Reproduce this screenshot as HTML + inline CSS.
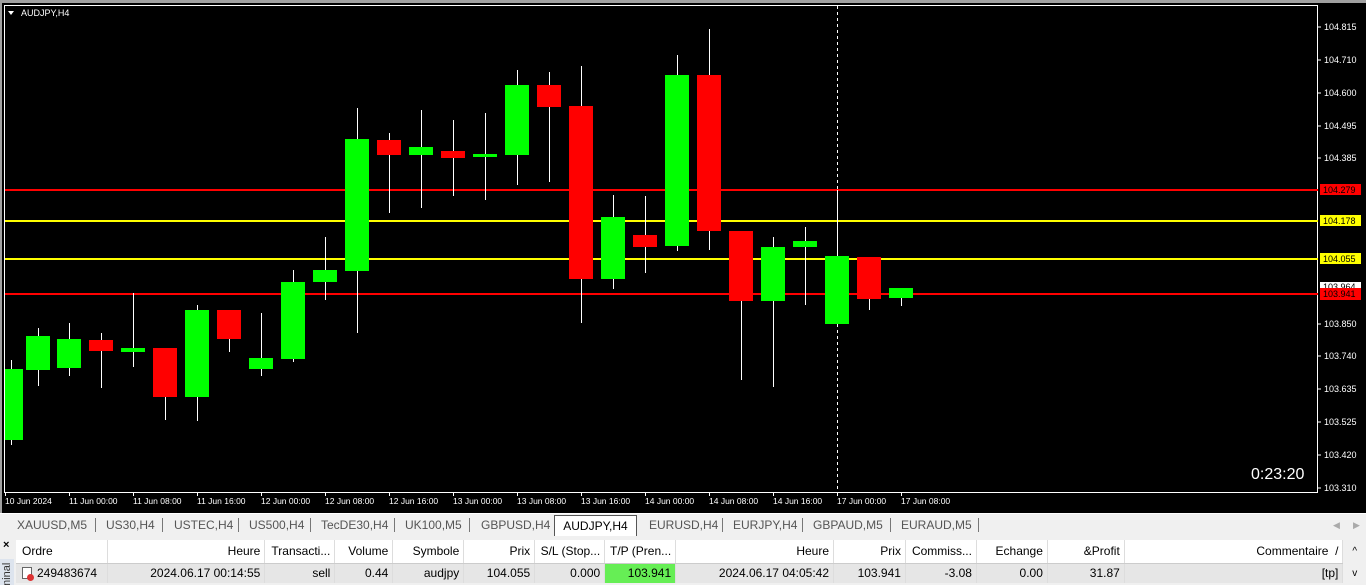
<!DOCTYPE html>
<html><head><meta charset="utf-8"><style>
*{margin:0;padding:0;box-sizing:border-box}
body{width:1366px;height:585px;overflow:hidden;background:#f0f0f0;font-family:"Liberation Sans",sans-serif;position:relative}
#chart{position:absolute;left:0;top:0}
.tabs{position:absolute;top:513px;left:0;width:1366px;height:22px;background:#f0f0f0;border-top:1px solid #fff;font-size:12px;color:#555}
.tab{position:absolute;top:4px}
.sep{position:absolute;top:4px;width:1px;height:14px;background:#777}
.act{position:absolute;left:554px;top:1px;width:83px;height:21px;background:#fff;border:1px solid #555;border-bottom:none;color:#000;text-align:center;padding-top:3px}
.term{position:absolute;top:537px;left:0;width:1366px;height:48px;background:#f0f0f0}
table{position:absolute;left:16px;top:540px;border-collapse:collapse;font-size:12px;color:#000}
td{height:23px;border-right:1px solid #ddd;padding:0 4px;white-space:nowrap;overflow:hidden}
tr.h td{background:#fff;border-bottom:1px solid #ccc}
tr.r td{background:#e6e6e6;height:20px}
.R{text-align:right}
</style></head><body>
<svg id="chart" width="1366" height="513" xmlns="http://www.w3.org/2000/svg" font-family="Liberation Sans, sans-serif">
<rect x="0" y="0" width="1366" height="513" fill="#000"/>
<rect x="0" y="0" width="1366" height="3" fill="#a0a0a0"/>
<rect x="0" y="0" width="2" height="513" fill="#a0a0a0"/>
<rect x="4.5" y="5.5" width="1313" height="487" fill="none" stroke="#fff" stroke-width="1"/>
<polygon points="8,11 14,11 11,15" fill="#fff"/>
<text x="21" y="16" font-size="9" fill="#fff">AUDJPY,H4</text>
<line x1="837.5" y1="6" x2="837.5" y2="492" stroke="#fff" stroke-dasharray="3,3"/>
<g stroke-width="1">
<line x1="5" y1="190" x2="1318" y2="190" stroke="#f00" stroke-width="2"/>
<line x1="5" y1="221" x2="1318" y2="221" stroke="#ff0" stroke-width="2"/>
<line x1="5" y1="259" x2="1318" y2="259" stroke="#ff0" stroke-width="2"/>
<line x1="5" y1="294" x2="1318" y2="294" stroke="#f00" stroke-width="2"/>
</g>
<g id="c"></g>
<g font-size="9" fill="#fff">
<text x="1324" y="30">104.815</text><text x="1324" y="63">104.710</text><text x="1324" y="96">104.600</text><text x="1324" y="129">104.495</text><text x="1324" y="161">104.385</text><text x="1324" y="327">103.850</text><text x="1324" y="359">103.740</text><text x="1324" y="392">103.635</text><text x="1324" y="425">103.525</text><text x="1324" y="458">103.420</text><text x="1324" y="491">103.310</text>
</g>
<g stroke="#fff"><line x1="1318" y1="27" x2="1321" y2="27"/><line x1="1318" y1="60" x2="1321" y2="60"/><line x1="1318" y1="93" x2="1321" y2="93"/><line x1="1318" y1="126" x2="1321" y2="126"/><line x1="1318" y1="158" x2="1321" y2="158"/><line x1="1318" y1="324" x2="1321" y2="324"/><line x1="1318" y1="356" x2="1321" y2="356"/><line x1="1318" y1="389" x2="1321" y2="389"/><line x1="1318" y1="422" x2="1321" y2="422"/><line x1="1318" y1="455" x2="1321" y2="455"/><line x1="1318" y1="488" x2="1321" y2="488"/></g>
<rect x="1320" y="184" width="41" height="11" fill="#f00"/><text x="1323" y="193" font-size="9" fill="#000">104.279</text>
<rect x="1320" y="215" width="41" height="11" fill="#ff0"/><text x="1323" y="224" font-size="9" fill="#000">104.178</text>
<rect x="1320" y="253" width="41" height="11" fill="#ff0"/><text x="1323" y="262" font-size="9" fill="#000">104.055</text>
<rect x="1320" y="282" width="41" height="8" fill="#fff"/><text x="1323" y="290" font-size="9" fill="#000">103.964</text>
<rect x="1320" y="288" width="41" height="12" fill="#f00"/><text x="1323" y="297" font-size="9" fill="#000">103.941</text>
<text x="1251" y="479" font-size="16" fill="#fff">0:23:20</text>
<g id="t" font-size="8.5" fill="#fff"></g>
</svg>
<div class="tabs">
<span class="tab" style="left:17px">XAUUSD,M5</span><span class="sep" style="left:95px"></span>
<span class="tab" style="left:106px">US30,H4</span><span class="sep" style="left:162px"></span>
<span class="tab" style="left:174px">USTEC,H4</span><span class="sep" style="left:238px"></span>
<span class="tab" style="left:249px">US500,H4</span><span class="sep" style="left:310px"></span>
<span class="tab" style="left:321px">TecDE30,H4</span><span class="sep" style="left:394px"></span>
<span class="tab" style="left:405px">UK100,M5</span><span class="sep" style="left:469px"></span>
<span class="tab" style="left:481px">GBPUSD,H4</span>
<div class="act">AUDJPY,H4</div>
<span class="tab" style="left:649px">EURUSD,H4</span><span class="sep" style="left:722px"></span>
<span class="tab" style="left:733px">EURJPY,H4</span><span class="sep" style="left:802px"></span>
<span class="tab" style="left:813px">GBPAUD,M5</span><span class="sep" style="left:890px"></span>
<span class="tab" style="left:901px">EURAUD,M5</span><span class="sep" style="left:978px"></span>
<span class="tab" style="left:1333px;color:#aaa;font-size:9px;top:6px">◀</span><span class="tab" style="left:1353px;color:#aaa;font-size:9px;top:6px">▶</span>
</div>
<div class="term">
<div style="position:absolute;left:3px;top:2px;font-size:11px;font-weight:bold">×</div>
<div style="position:absolute;left:0;top:22px;width:14px;height:26px;background:#dde4ee;font-size:11px;color:#333;overflow:hidden"><span style="display:block;transform:rotate(-90deg);transform-origin:left top;position:absolute;left:1px;top:30px">minal</span></div>
</div>
<table>
<tr class="h"><td style="width:92px;padding-left:6px">Ordre</td><td class="R" style="width:157px">Heure</td><td class="R" style="width:70px">Transacti...</td><td class="R" style="width:58px">Volume</td><td class="R" style="width:71px">Symbole</td><td class="R" style="width:71px">Prix</td><td class="R" style="width:70px">S/L (Stop...</td><td class="R" style="width:71px">T/P (Pren...</td><td class="R" style="width:158px">Heure</td><td class="R" style="width:72px">Prix</td><td class="R" style="width:71px">Commiss...</td><td class="R" style="width:71px">Echange</td><td class="R" style="width:77px">&amp;Profit</td><td class="R" style="width:219px">Commentaire &nbsp;/</td><td style="width:23px;border:none;background:#f0f0f0;text-align:center;font-size:10px">^</td></tr>
<tr class="r"><td style="padding-left:6px"><span style="display:inline-block;width:10px;height:12px;border:1px solid #666;background:#fff;position:relative;vertical-align:-2px;margin-right:5px"><span style="position:absolute;left:4px;top:6px;width:7px;height:7px;border-radius:50%;background:#d33"></span></span>249483674</td><td class="R">2024.06.17 00:14:55</td><td class="R">sell</td><td class="R">0.44</td><td class="R">audjpy</td><td class="R">104.055</td><td class="R">0.000</td><td class="R" style="background:#66ee55">103.941</td><td class="R">2024.06.17 04:05:42</td><td class="R">103.941</td><td class="R">-3.08</td><td class="R">0.00</td><td class="R">31.87</td><td class="R">[tp]</td><td style="border:none;background:#f0f0f0;text-align:center;font-size:10px">v</td></tr>
</table>
<script>
var d=[[11,1,369,440,360,445],[38,1,336,370,328,386],[69,1,339,368,323,376],[101,0,340,351,333,388],[133,1,348,352,293,367],[165,0,348,397,348,420],[197,1,310,397,305,421],[229,0,310,339,310,352],[261,1,358,369,313,376],[293,1,282,359,270,362],[325,1,270,282,237,300],[357,1,139,271,108,333],[389,0,140,155,133,213],[421,1,147,155,110,208],[453,0,151,158,120,196],[485,1,154,157,113,200],[517,1,85,155,70,185],[549,0,85,107,72,182],[581,0,106,279,66,323],[613,1,217,279,195,289],[645,0,235,247,196,273],[677,1,75,246,55,251],[709,0,75,231,29,250],[741,0,231,301,231,380],[773,1,247,301,237,387],[805,1,241,247,227,305],[837,1,256,324,190,324],[869,0,257,299,257,310],[901,1,288,298,288,306]];
var s='',ns='http://www.w3.org/2000/svg';
d.forEach(function(c){var col=c[1]?'#00ff00':'#ff0000';var x0=c[0]-12;if(x0<5)x0=5;var w=c[0]+12-x0;
s+='<line x1="'+(c[0]+.5)+'" y1="'+c[4]+'" x2="'+(c[0]+.5)+'" y2="'+c[5]+'" stroke="#fff"/>';
s+='<rect x="'+x0+'" y="'+c[2]+'" width="'+w+'" height="'+(c[3]-c[2])+'" fill="'+col+'"/>';});
document.getElementById('c').innerHTML=s;
var L=['10 Jun 2024','11 Jun 00:00','11 Jun 08:00','11 Jun 16:00','12 Jun 00:00','12 Jun 08:00','12 Jun 16:00','13 Jun 00:00','13 Jun 08:00','13 Jun 16:00','14 Jun 00:00','14 Jun 08:00','14 Jun 16:00','17 Jun 00:00','17 Jun 08:00'];
var t='';L.forEach(function(l,i){var x=i==0?5:5+i*64;t+='<text x="'+x+'" y="504">'+l+'</text><line x1="'+(x+.5)+'" y1="493" x2="'+(x+.5)+'" y2="496" stroke="#fff"/>';});
document.getElementById('t').innerHTML=t;
</script>
</body></html>
